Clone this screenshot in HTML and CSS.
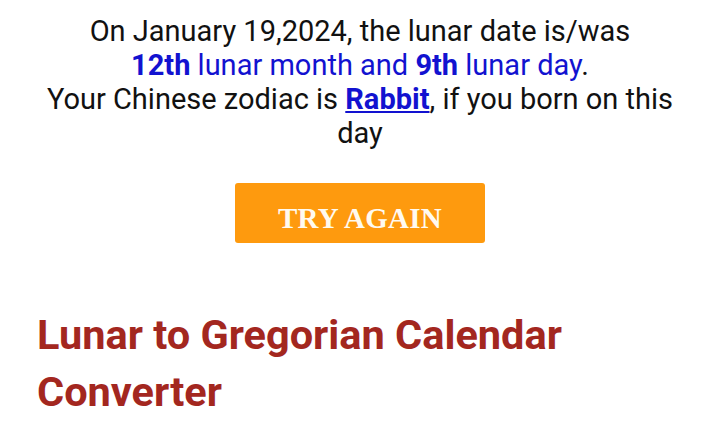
FILE: index.html
```html
<!DOCTYPE html>
<html>
<head>
<meta charset="utf-8">
<link rel="stylesheet" href="styles.css">
</head>
<body>
<div class="result">
  <p class="line">On January 19,2024, the lunar date is/was</p>
  <p class="line lunar"><b>12th</b> lunar month and <b>9th</b> lunar day<span class="dot">.</span></p>
  <p class="line">Your Chinese zodiac is <a class="zodiac" href="#">Rabbit</a>, if you born on this day</p>
</div>
<div class="actions">
  <button class="try">TRY AGAIN</button>
</div>
<h2 class="heading">Lunar to Gregorian Calendar Converter</h2>
</body>
</html>
```
FILE: styles.css
```css
html, body {
  margin: 0;
  padding: 0;
  background: #fff;
}
body {
  font-family: Roboto, "Liberation Sans", sans-serif;
  color: #111;
}
.result {
  padding: 14px 32px 0;
  text-align: center;
  font-size: 29px;
  line-height: 34px;
}
.line {
  margin: 0;
}
.lunar {
  color: #1212d0;
}
.lunar b {
  font-weight: 700;
}
.dot {
  color: #111;
}
.zodiac {
  color: #1212d0;
  font-weight: 700;
  text-decoration: underline;
}
.actions {
  display: flex;
  justify-content: center;
  padding-top: 33px;
}
.try {
  width: 250px;
  height: 60px;
  border: 0;
  border-radius: 3px;
  background: #fe9a0e;
  color: #fffaf0;
  font-family: "Liberation Serif", "DejaVu Serif", serif;
  font-weight: 700;
  font-size: 29px;
  letter-spacing: 0.3px;
  padding: 10px 0 0;
}
.heading {
  margin: 0;
  padding: 63px 37px 0;
  color: #a3271f;
  font-size: 41.5px;
  line-height: 57px;
  font-weight: 700;
}
```
